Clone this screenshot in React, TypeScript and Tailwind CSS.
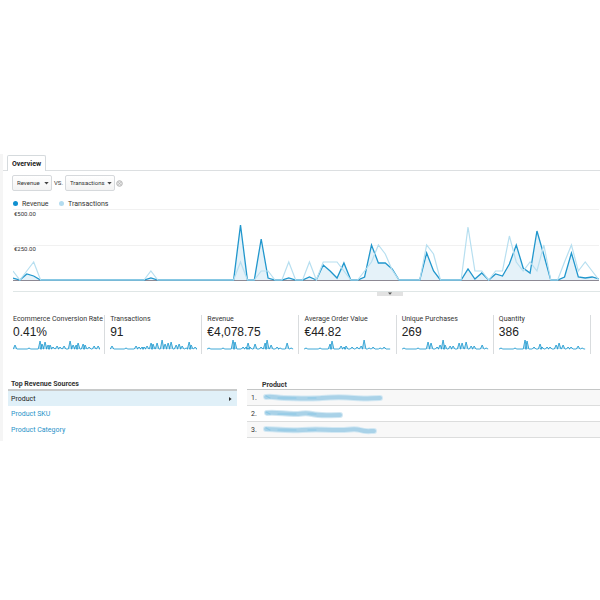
const DAYS = 85;
const BASE = 71;

// day -> height above the baseline, every other day is zero
const revenue: Record<number, number> = {
    0: 2, 2: 6, 3: 4, 20: 2, 33: 55, 36: 41, 37: 2, 40: 2, 43: 3,
    45: 15, 46: 9, 47: 2, 48: 17, 51: 3, 52: 35, 53: 17, 54: 17, 55: 11,
    60: 27, 61: 9, 66: 11, 67: 1, 68: 7, 70: 6, 71: 4, 72: 16, 73: 35,
    74: 12, 75: 7, 76: 49, 77: 25, 80: 3, 81: 27, 82: 3, 83: 2, 84: 3, 85: 1,
};

const transactions: Record<number, number> = {
    0: 9, 2: 9, 3: 18, 20: 9, 33: 18, 36: 9, 37: 9, 40: 18, 43: 18,
    45: 18, 46: 18, 47: 18, 48: 9, 51: 9, 52: 18, 53: 35, 54: 26, 55: 10,
    60: 35, 61: 26, 66: 53, 67: 9, 68: 9, 70: 9, 71: 9, 72: 44, 73: 18,
    74: 9, 75: 18, 76: 9, 77: 35, 80: 18, 81: 35, 82: 9, 83: 18, 84: 9,
};

interface Metric {
    label: string;
    value: string;
    peaks: [number, number][];
}

const metrics: Metric[] = [
    {
        label: "Ecommerce Conversion Rate",
        value: "0.41%",
        peaks: [[2, 4], [16, 1], [27, 8], [29, 5], [32, 7], [35, 4], [37, 4], [40, 2], [44, 3], [47, 2], [51, 3], [57, 8], [60, 4], [63, 4], [65, 6], [70, 5], [72, 4], [76, 2], [81, 3], [85, 3]],
    },
    {
        label: "Transactions",
        value: "91",
        peaks: [[2, 3], [16, 1], [26, 3], [29, 2], [32, 2], [34, 2], [37, 3], [41, 6], [43, 5], [47, 6], [52, 9], [55, 5], [58, 6], [61, 7], [66, 4], [69, 5], [72, 3], [76, 1], [79, 7], [81, 4], [85, 2]],
    },
    {
        label: "Revenue",
        value: "€4,078.75",
        peaks: [[2, 1], [16, 1], [26, 9], [28, 7], [36, 2], [39, 2], [41, 6], [43, 2], [48, 5], [54, 2], [58, 6], [60, 9], [64, 4], [70, 2], [73, 1], [80, 6], [84, 1]],
    },
    {
        label: "Average Order Value",
        value: "€44.82",
        peaks: [[2, 1], [16, 1], [26, 5], [28, 8], [37, 3], [40, 2], [42, 3], [48, 2], [53, 2], [57, 3], [60, 9], [65, 1], [69, 2], [76, 1], [80, 2]],
    },
    {
        label: "Unique Purchases",
        value: "269",
        peaks: [[2, 1], [16, 1], [26, 7], [29, 6], [35, 2], [38, 4], [41, 9], [43, 4], [48, 3], [51, 3], [57, 6], [60, 6], [64, 7], [69, 3], [72, 3], [80, 4], [84, 1]],
    },
    {
        label: "Quantity",
        value: "386",
        peaks: [[2, 1], [16, 1], [26, 9], [28, 8], [35, 2], [41, 5], [43, 2], [48, 2], [51, 2], [57, 4], [60, 6], [64, 4], [69, 2], [72, 2], [79, 3], [83, 1]],
    },
];

// marker strokes that hide the product names
const smudges = [
    "M4 5C12 4 14 6 22 6S48 7 60 6S82 5 92 6S110 6 118 6",
    "M5 5C14 4 22 6 32 6S42 4 50 6S66 7 78 7",
    "M4 5C12 5 24 7 40 6S62 6 76 6S92 4 98 6S108 7 112 7",
];

function toPoints(series: Record<number, number>) {
    const points = [];
    for (let day = 0; day <= DAYS; day++) {
        points.push(`${day},${BASE - (series[day] ?? 0)}`);
    }
    return points.join(" ");
}

function Chart() {
    return (
        <div className="relative mt-px mr-px ml-[10px] text-[6px] leading-[8px]">
            <svg className="block h-[72px] w-full" viewBox={`0 0 ${DAYS} 72`} preserveAspectRatio="none" fill="none">
                <path d={`M0 0.5H${DAYS}M0 36.5H${DAYS}`} stroke="#f1f1f1" vectorEffect="non-scaling-stroke" />
                <polygon points={`0,${BASE} ${toPoints(revenue)} ${DAYS},${BASE}`} fill="#e5f2f9" />
                <path d={`M0 71.5H${DAYS}`} stroke="#8d8994" vectorEffect="non-scaling-stroke" />
                <polyline points={toPoints(revenue)} stroke="#2197cd" strokeWidth="1.3" vectorEffect="non-scaling-stroke" />
                <polyline points={toPoints(transactions)} stroke="#b7dff0" strokeWidth="1.2" vectorEffect="non-scaling-stroke" />
            </svg>
            <span className="absolute left-px top-px">€500.00</span>
            <span className="absolute left-px top-9">€250.00</span>
        </div>
    );
}

function Sparkline({ peaks }: { peaks: [number, number][] }) {
    const d = peaks.map(([x, h]) => `L${x - 1.8} 9L${x} ${9 - h}L${x + 1.8} 9`).join("");
    return (
        <svg className="block h-[10px] w-full" viewBox="0 0 87 10" preserveAspectRatio="none" fill="none">
            <path d={`M0 9${d}L86 9`} fill="#b5dcef" stroke="#2a9fd2" strokeWidth="0.9" strokeLinejoin="bevel" />
        </svg>
    );
}

function Picker({ label, value, className }: { label: string; value: string; className: string }) {
    return (
        <div className={`relative h-4 ${className}`}>
            <select
                aria-label={label}
                defaultValue={value}
                className="block size-full appearance-none rounded-xs border border-[#d6d9dc] bg-linear-to-b from-white to-[#f3f3f3] pl-1 text-[6px] leading-[14px]"
            >
                <option>{value}</option>
            </select>
            <svg className="pointer-events-none absolute right-[3px] top-[7px] h-[3px] w-[5px]" viewBox="0 0 5 3">
                <path d="M0.3 0H4.7L2.5 2.6Z" fill="#444" />
            </svg>
        </div>
    );
}

export default function App() {
    return (
        <div className="bg-white pt-[154px] font-[Roboto,'Liberation_Sans',sans-serif] text-[7px] leading-[8px] text-[#333]">
            <main className="overflow-hidden border-l-3 border-[#f5f5f5] pb-[3px]">
                <div className="flex h-[17px] items-end border-b border-[#dcdfe1] pl-1">
                    <button className="-mb-px h-4 rounded-t-xs border border-b-0 border-[#d5dadd] bg-white px-1 font-bold text-[#222]">
                        Overview
                    </button>
                </div>

                <div className="mt-1 flex items-center pl-[9px]">
                    <Picker label="Metric" value="Revenue" className="w-10" />
                    <span className="w-[13px] text-center text-[6px]">VS.</span>
                    <Picker label="Compared metric" value="Transactions" className="w-[50px]" />
                    <button aria-label="Remove comparison" className="ml-px">
                        <svg className="block size-[7px]" viewBox="0 0 7 7" fill="none" stroke="#b5b5b5">
                            <circle cx="3.5" cy="3.5" r="2.8" fill="#e6e6e6" />
                            <path d="M2.3 2.3L4.7 4.7M4.7 2.3L2.3 4.7" strokeWidth="0.8" />
                        </svg>
                    </button>
                </div>

                <div className="mt-2 flex h-[9px] items-center pl-[10px]">
                    <span className="size-[5px] rounded-full bg-[#1090d0]" />
                    <span className="ml-1 w-[37px]">Revenue</span>
                    <span className="size-[5px] rounded-full bg-[#b3dcf0]" />
                    <span className="ml-1">Transactions</span>
                </div>

                <Chart />

                <div className="mt-[10px] ml-[10px] flex h-[5px] border-t border-[#dfe6e6] pl-[61%]">
                    <button aria-label="Show annotations" className="flex h-1 w-[26px] justify-center bg-[#e2e2e2]">
                        <svg className="block h-[3px] w-1" viewBox="0 0 4 3">
                            <path d="M0 0.5H4L2 2.8Z" fill="#555" />
                        </svg>
                    </button>
                </div>

                <div className="mt-[19px] mr-[9px] ml-[5px] grid grid-cols-6">
                    {metrics.map((metric) => (
                        <div key={metric.label} className="h-[39px] border-r border-[#d9dcde] pr-1 pl-[5px] whitespace-nowrap">
                            <div>{metric.label}</div>
                            <div className="mt-px font-['Liberation_Sans',Arial,sans-serif] text-[12px] leading-4 text-[#222]">{metric.value}</div>
                            <Sparkline peaks={metric.peaks} />
                        </div>
                    ))}
                </div>

                <div className="mt-[25px] flex items-start pl-[5px]">
                    <section className="w-[229px]">
                        <h2 className="h-[10px] pt-px pl-[3px] font-bold">Top Revenue Sources</h2>
                        <ul className="border-t-2 border-[#c8caca]">
                            <li className="flex h-[15px] items-center justify-between bg-[#e0f0f8] pr-[5px] pl-[3px] text-[#222]">
                                <a href="#product">Product</a>
                                <svg className="block h-1 w-[3px]" viewBox="0 0 3 4">
                                    <path d="M0 0L2.6 2L0 4Z" fill="#333" />
                                </svg>
                            </li>
                            <li className="flex h-4 items-center pl-[3px] text-[#2a93c9]">
                                <a href="#sku">Product SKU</a>
                            </li>
                            <li className="flex h-4 items-center pl-[3px] text-[#2a93c9]">
                                <a href="#category">Product Category</a>
                            </li>
                        </ul>
                    </section>

                    <table className="ml-[10px] flex-1 border-separate border-spacing-0 text-left">
                        <thead>
                            <tr className="h-[11px]">
                                <th className="w-[15px] border-b border-[#c4c6c6] p-0" />
                                <th className="border-b border-[#c4c6c6] p-0 pt-px font-bold">Product</th>
                            </tr>
                        </thead>
                        <tbody>
                            {smudges.map((d, i) => (
                                <tr key={d} className="h-4 odd:bg-[#f8f8f8]">
                                    <td className="border-b border-[#dcdddd] p-0 pl-1">{i + 1}.</td>
                                    <td className="border-b border-[#dcdddd] p-0">
                                        <svg className="block h-3 w-[130px]" viewBox="0 0 130 12" fill="none" strokeLinecap="round">
                                            <path d={d} stroke="#d3e8f3" strokeWidth="6" />
                                            <path d={d} stroke="#a9d2e8" strokeWidth="4" />
                                            <path d="M4 4L8 6M16 6H34M46 6H54" stroke="#8cc8e5" strokeWidth="1.2" />
                                        </svg>
                                    </td>
                                </tr>
                            ))}
                        </tbody>
                    </table>
                </div>
            </main>
        </div>
    );
}
